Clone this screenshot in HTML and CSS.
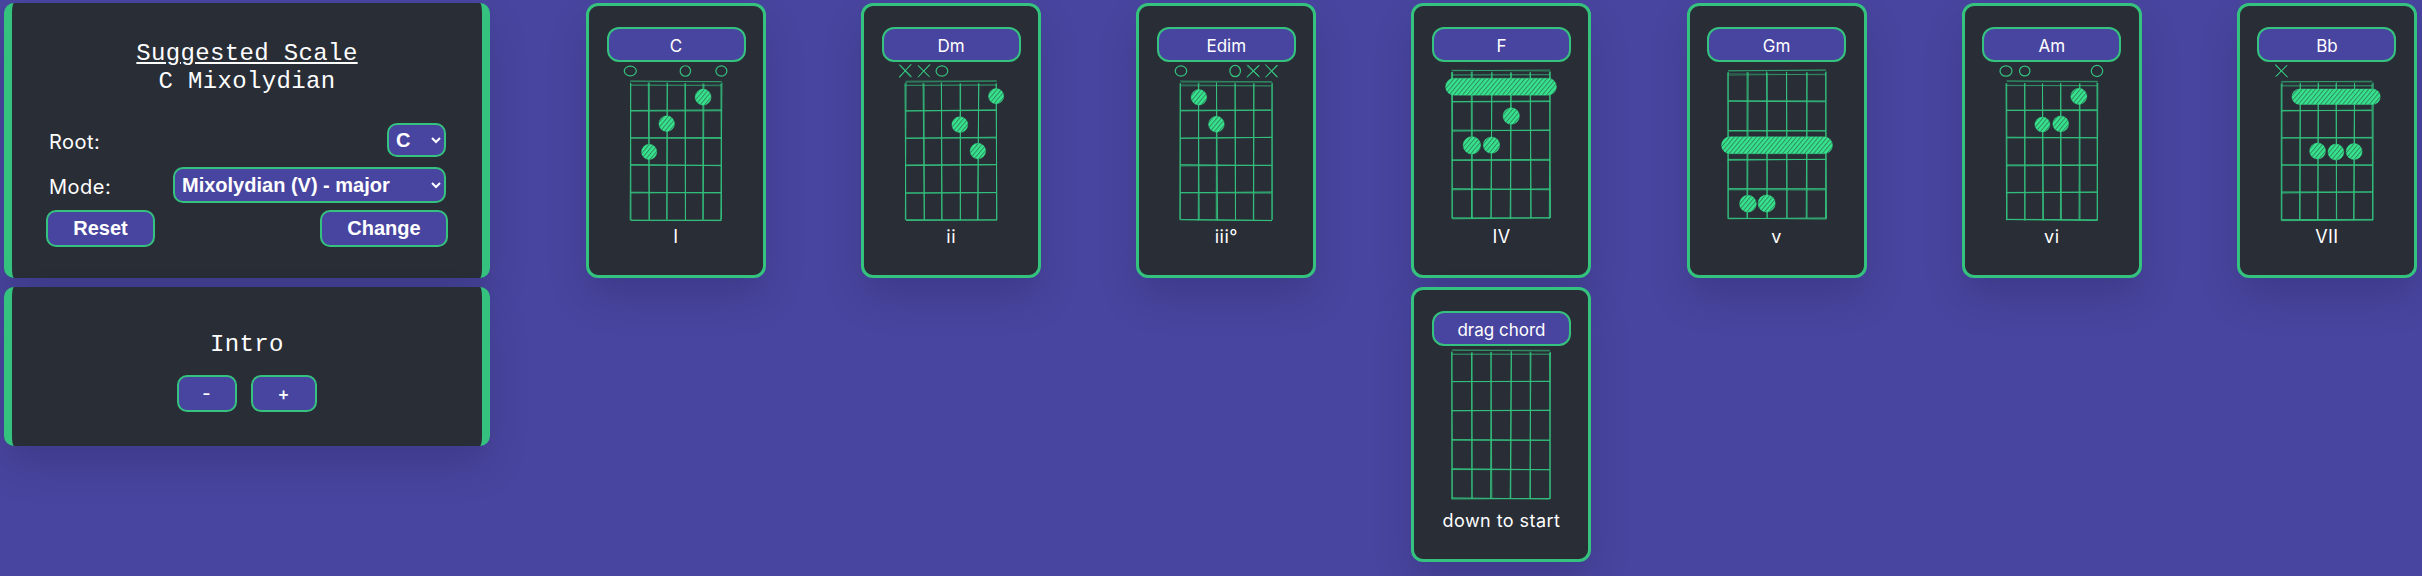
FILE: index.html
```html
<!doctype html>
<html lang="en">
<head>
  <meta charset="UTF-8">
  <meta name="viewport" content="width=device-width, initial-scale=1">
  <title>Chord Progressions</title>

  <link rel="stylesheet" href="styles.css">
</head>
<body>

<main>
  <aside class="sidebar">
    <form class="panel scale-panel">
      <h2 class="scale-title"><u>Suggested Scale</u><br>C Mixolydian</h2>

      <label class="field">
        <span class="field-name">Root:</span>
        <select class="control">
          <option>C</option>
          <option>D</option>
          <option>E</option>
          <option>F</option>
          <option>G</option>
          <option>A</option>
          <option>B</option>
        </select>
      </label>

      <label class="field mode-field">
        <span class="field-name">Mode:</span>
        <select class="control mode-select">
          <option>Mixolydian (V) - major</option>
          <option>Ionian (I) - major</option>
          <option>Dorian (II) - minor</option>
        </select>
      </label>

      <div class="scale-actions">
        <button type="button" class="control reset">Reset</button>
        <button type="button" class="control change">Change</button>
      </div>
    </form>

    <section class="panel intro-panel">
      <h2 class="section-name">Intro</h2>
      <div class="stepper">
        <button type="button" class="control minus">-</button>
        <button type="button" class="control plus">+</button>
      </div>
    </section>
  </aside>

  <section class="chords">
    <article class="card">
      <button type="button" class="chord-name">C</button>
      <svg class="chart" data-chord="C"></svg>
      <p class="degree">I</p>
    </article>
    <article class="card">
      <button type="button" class="chord-name">Dm</button>
      <svg class="chart" data-chord="Dm"></svg>
      <p class="degree">ii</p>
    </article>
    <article class="card">
      <button type="button" class="chord-name">Edim</button>
      <svg class="chart" data-chord="Edim"></svg>
      <p class="degree">iii°</p>
    </article>
    <article class="card">
      <button type="button" class="chord-name">F</button>
      <svg class="chart" data-chord="F"></svg>
      <p class="degree">IV</p>
    </article>
    <article class="card">
      <button type="button" class="chord-name">Gm</button>
      <svg class="chart" data-chord="Gm"></svg>
      <p class="degree">v</p>
    </article>
    <article class="card">
      <button type="button" class="chord-name">Am</button>
      <svg class="chart" data-chord="Am"></svg>
      <p class="degree">vi</p>
    </article>
    <article class="card">
      <button type="button" class="chord-name">Bb</button>
      <svg class="chart" data-chord="Bb"></svg>
      <p class="degree">VII</p>
    </article>
    <article class="card drag-card">
      <button type="button" class="chord-name">drag chord</button>
      <svg class="chart" data-chord="drag"></svg>
      <p class="degree">down to start</p>
    </article>
  </section>
</main>

<script src="chords.js"></script>

</body>
</html>
```

FILE: styles.css
```css
* {
    margin: 0;
    padding: 0;
    box-sizing: border-box;
}

html, body {
    height: 100%;
}

body {
    background-color: #4845a0;
    color: #fff;
    font-family: "Inter", "Open Sans", sans-serif;
    overflow: hidden;
}

main {
    display: flex;
    align-items: flex-start;
    gap: 96px;
    padding: 3px 5px 0 4px;
}

.sidebar {
    width: 486px;
    flex: none;
    display: flex;
    flex-direction: column;
    gap: 9px;
}

.panel {
    background-color: #292d36;
    border-left: 8px solid #34c27e;
    border-right: 8px solid #34c27e;
    border-radius: 10px;
    box-shadow: 0 20px 40px rgba(0, 0, 0, .14);
    text-align: center;
}

.scale-panel {
    padding: 37px 36px 31px;
}

.intro-panel {
    padding: 44px 36px 34px;
}

.scale-title, .section-name {
    font-family: "Liberation Mono", monospace;
    font-size: 24px;
    font-weight: normal;
    line-height: 28px;
    letter-spacing: .35px;
}

.scale-title {
    margin-bottom: 27px;
}

.section-name {
    margin-bottom: 16px;
}

.field {
    display: flex;
    align-items: center;
    justify-content: space-between;
    font-size: 20px;
    letter-spacing: .5px;
    height: 34px;
    padding-left: 1px;
}

.field-name {
    margin-top: 3px;
}

.mode-field {
    height: 36px;
    margin-top: 10px;
}

.control {
    background-color: #4845a0;
    color: #fff;
    border: 2px solid #34c27e;
    border-radius: 10px;
    font-family: "Liberation Sans", sans-serif;
    font-size: 20px;
    font-weight: bold;
    letter-spacing: 0;
}

select.control {
    width: 59px;
    height: 34px;
    padding-left: 3px;
}

select.mode-select {
    width: 273px;
    height: 36px;
}

.scale-actions {
    display: flex;
    justify-content: space-between;
    margin: 7px -2px 0 -2px;
}

.reset, .change {
    height: 37px;
}

.reset {
    width: 109px;
}

.change {
    width: 128px;
}

.stepper {
    display: flex;
    justify-content: center;
    gap: 14px;
    padding-right: 1px;
}

.stepper .control {
    height: 37px;
    font-family: "Inter", sans-serif;
    font-size: 18px;
    font-weight: 500;
}

.minus {
    width: 60px;
}

.plus {
    width: 66px;
}

.chords {
    flex: 1;
    display: grid;
    grid-template-columns: repeat(7, 180px);
    justify-content: space-between;
    row-gap: 9px;
}

.card {
    height: 275px;
    background-color: #292d36;
    border: 3px solid #34c27e;
    border-radius: 12px;
    box-shadow: 0 20px 40px rgba(0, 0, 0, .14);
    display: flex;
    flex-direction: column;
    align-items: center;
    padding-top: 21px;
}

.drag-card {
    grid-column: 4;
}

.chord-name {
    width: 139px;
    height: 35px;
    flex: none;
    padding-top: 2px;
    background-color: #4845a0;
    color: #fff;
    border: 2px solid #34c27e;
    border-radius: 12px;
    font-family: "Inter", sans-serif;
    font-size: 17px;
}

.chart {
    width: 174px;
    height: 166px;
    flex: none;
}

.degree {
    margin-top: -1px;
    font-size: 18px;
    letter-spacing: .45px;
    line-height: 20px;
}
```

FILE: chords.js
```js
const SVG_NS = 'http://www.w3.org/2000/svg';
const GREEN = '#34c27e';
const DOT_GREEN = '#36e48d';
const CENTER = 87;

// strings are 0-5 left to right, frets 1-5. bars are [fromString, toString, fret]
const CHORDS = {
    C: {open: [0, 3, 5], dots: [[4, 1], [2, 2], [1, 3]]},
    Dm: {muted: [0, 1], open: [2], dots: [[5, 1], [3, 2], [4, 3]]},
    Edim: {open: [0, 3], muted: [4, 5], dots: [[1, 1], [2, 2]]},
    F: {wide: true, bars: [[0, 5, 1]], dots: [[3, 2], [1, 3], [2, 3]]},
    Gm: {wide: true, bars: [[0, 5, 3]], dots: [[1, 5], [2, 5]]},
    Am: {open: [0, 1, 5], dots: [[4, 1], [2, 2], [3, 2]]},
    Bb: {muted: [0], bars: [[1, 5, 1]], dots: [[2, 3], [3, 3], [4, 3]]},
    drag: {wide: true, top: 6, dots: []},
};

let seed = 7;

function wobble(amount) {
    seed = (seed * 16807) % 2147483647;
    return ((seed % 1000) / 1000 - .5) * 2 * amount;
}

function add(svg, tag, attrs) {
    const el = document.createElementNS(SVG_NS, tag);
    for (const name in attrs) {
        el.setAttribute(name, attrs[name]);
    }
    svg.appendChild(el);
    return el;
}

function roughLine(svg, x1, y1, x2, y2, opacity) {
    for (let pass = 0; pass < 2; pass++) {
        add(svg, 'line', {
            x1: x1 + wobble(.7),
            y1: y1 + wobble(.7),
            x2: x2 + wobble(.7),
            y2: y2 + wobble(.7),
            stroke: GREEN,
            'stroke-width': 1,
            opacity: opacity,
        });
    }
}

function drawGrid(svg, g) {
    for (let s = 0; s < 6; s++) {
        const x = g.left + s * g.string;
        roughLine(svg, x, g.top, x, g.bottom, .95);
    }
    for (let f = 1; f < 6; f++) {
        const y = g.top + f * g.fret;
        roughLine(svg, g.left, y, g.right, y, .95);
    }
    // nut is drawn as two faint lines
    roughLine(svg, g.left, g.top - 1.5, g.right, g.top - 1.5, .55);
    roughLine(svg, g.left, g.top + 2.5, g.right, g.top + 2.5, .45);
}

function drawMarkers(svg, g, chord) {
    for (const s of chord.open || []) {
        add(svg, 'ellipse', {
            cx: g.left + s * g.string + wobble(.5),
            cy: 9,
            rx: 5.6 + wobble(.5),
            ry: 5.4 + wobble(.6),
            fill: 'none',
            stroke: GREEN,
            'stroke-width': 1.2,
        });
    }
    for (const s of chord.muted || []) {
        const x = g.left + s * g.string;
        roughLine(svg, x - 6, 3, x + 6, 15, 1);
        roughLine(svg, x + 6, 3, x - 6, 15, 1);
    }
}

function drawDots(svg, g, chord, hatchId) {
    const radius = chord.wide ? 8.5 : 7.8;
    const fill = {
        fill: `url(#${hatchId})`,
        stroke: DOT_GREEN,
        'stroke-width': .8,
        'stroke-opacity': .45,
    };

    for (const [from, to, fret] of chord.bars || []) {
        add(svg, 'rect', {
            x: g.left + from * g.string - radius + (from === 0 ? 2 : 0),
            y: g.top + (fret - .5) * g.fret - radius,
            width: (to - from) * g.string + radius * 2 - (from === 0 ? 4 : 0),
            height: radius * 2,
            rx: radius,
            ...fill,
        });
    }
    for (const [s, fret] of chord.dots) {
        add(svg, 'circle', {
            cx: g.left + s * g.string + wobble(.6),
            cy: g.top + (fret - .5) * g.fret + wobble(.6),
            r: radius + wobble(.3),
            ...fill,
        });
    }
}

function addHatch(svg, id) {
    const defs = add(svg, 'defs', {});
    const pattern = add(defs, 'pattern', {
        id: id,
        width: 3.4,
        height: 3.4,
        patternUnits: 'userSpaceOnUse',
        patternTransform: 'rotate(40)',
    });
    add(pattern, 'rect', {width: 3.4, height: 3.4, fill: DOT_GREEN});
    add(pattern, 'rect', {width: 1, height: 3.4, fill: '#292d36', opacity: .5});
}

document.querySelectorAll('.chart').forEach((svg, i) => {
    const chord = CHORDS[svg.dataset.chord];
    const string = chord.wide ? 19.6 : 18.2;
    const fret = chord.wide ? 29.3 : 27.4;
    const top = chord.top || (chord.wide ? 10 : 21);
    const left = CENTER - string * 2.5;
    const grid = {
        string: string,
        fret: fret,
        top: top,
        bottom: top + fret * 5,
        left: left,
        right: left + string * 5,
    };

    svg.setAttribute('viewBox', '0 0 174 166');
    addHatch(svg, `hatch-${i}`);
    drawGrid(svg, grid);
    drawMarkers(svg, grid, chord);
    drawDots(svg, grid, chord, `hatch-${i}`);
});
```
